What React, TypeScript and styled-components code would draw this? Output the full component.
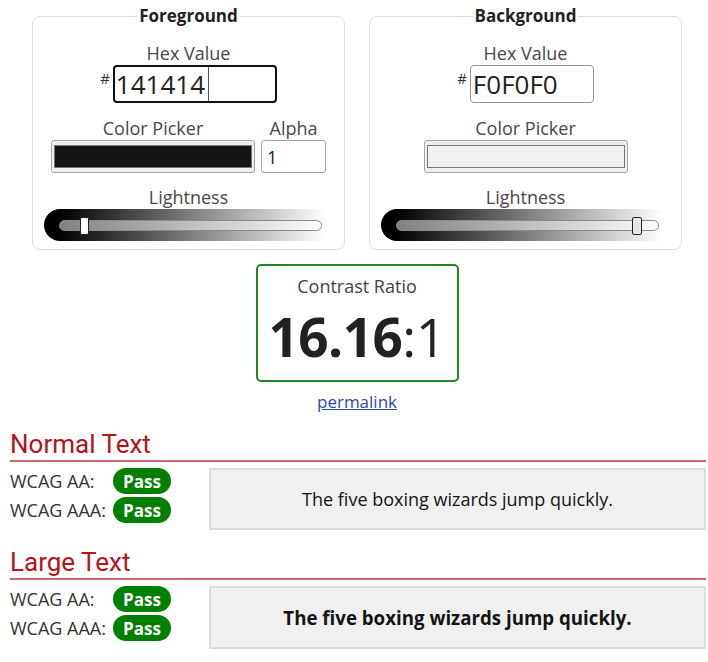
import React from 'react';
import styled, { createGlobalStyle } from 'styled-components';

const GlobalStyle = createGlobalStyle`
  html, body { margin: 0; padding: 0; background: #fff; overflow: hidden; }
  body { font-family: "Open Sans", "Noto Sans", sans-serif; color: #333; }
  * { box-sizing: border-box; }
`;

const Page = styled.div`
  width: 708px;
  padding-top: 4px;
  overflow: hidden;
`;

const TopArea = styled.div`
  width: 682px;
  padding-left: 32px;
  display: flex;
  flex-direction: column;
  align-items: center;
`;

const Panels = styled.div`
  display: flex;
  gap: 24px;
  width: 100%;
`;

const Panel = styled.fieldset`
  width: 313px;
  min-width: 0;
  margin: 0;
  padding: 0 8px 8px;
  border: 1px solid #ddd;
  border-radius: 8px;
  display: flex;
  flex-direction: column;
  align-items: center;
`;

const Legend = styled.legend`
  margin: 0 auto;
  padding: 0 2px;
  font-weight: 700;
  font-size: 17px;
  line-height: 24px;
  color: #222;
`;

const Label = styled.div<{ $mt?: number }>`
  font-size: 18px;
  line-height: 24px;
  color: #484848;
  text-align: center;
  margin-top: ${(p) => p.$mt ?? 0}px;
`;

const HexRow = styled.div`
  display: flex;
  align-items: flex-start;
  gap: 3px;
`;

const Hash = styled.span`
  font-size: 15px;
  line-height: 1;
  margin-top: 6px;
  color: #333;
`;

const HexWrap = styled.div`
  position: relative;
`;

const HexInput = styled.input<{ $focused?: boolean; $w: number }>`
  display: block;
  width: ${(p) => p.$w}px;
  height: 38px;
  font-family: inherit;
  font-size: 26px;
  color: #222;
  padding: 0 ${(p) => (p.$focused ? 1 : 2)}px;
  border: ${(p) => (p.$focused ? '2px solid #111' : '1px solid #999')};
  border-radius: 4px;
  outline: none;
  background: #fff;
`;

const Caret = styled.span`
  position: absolute;
  top: 2px;
  bottom: 2px;
  left: 95px;
  width: 1px;
  background: #555;
`;

const PickerRow = styled.div`
  display: flex;
  align-items: flex-end;
  gap: 6px;
  margin-top: 13px;
`;

const Column = styled.div`
  display: flex;
  flex-direction: column;
  align-items: center;
`;

const Swatch = styled.div`
  width: 204px;
  height: 33px;
  border: 1px solid #a4a4a4;
  border-radius: 3px;
  background: #efefef;
  padding: 4px 2px;
`;

const SwatchFill = styled.div<{ $color: string }>`
  height: 100%;
  border: 1px solid #777;
  background: ${(p) => p.$color};
`;

const AlphaInput = styled.input`
  display: block;
  width: 65px;
  height: 33px;
  border: 1px solid #a4a4a4;
  border-radius: 3px;
  font-family: inherit;
  font-size: 18px;
  color: #222;
  padding: 0 5px;
  outline: none;
`;

const Slider = styled.div`
  width: 290px;
  height: 32px;
  border-radius: 16px 0 0 16px;
  background: linear-gradient(to right, #000 0%, #000 5%, #fff 97%);
  padding: 11px 12px 0 15px;
`;

const Track = styled.div`
  position: relative;
  height: 11px;
  border: 1px solid #8a8a8a;
  border-radius: 6px;
  background: rgba(255, 255, 255, 0.5);
`;

const Thumb = styled.div<{ $fill: string; $w: number }>`
  position: absolute;
  top: -4px;
  width: ${(p) => p.$w}px;
  height: 18px;
  background: ${(p) => p.$fill};
  border: 1px solid #222;
  border-radius: 2px;
`;

const ContrastBox = styled.div`
  width: 203px;
  height: 118px;
  margin-top: 14px;
  border: 2px solid #1e8a1e;
  border-radius: 5px;
  padding-top: 9px;
  text-align: center;
`;

const RatioLabel = styled.div`
  font-size: 18px;
  line-height: 22px;
  color: #444;
`;

const RatioValue = styled.div`
  font-size: 53px;
  line-height: 60px;
  margin-top: 10px;
  color: #222;
  letter-spacing: -0.5px;
  b { font-weight: 700; }
`;

const Permalink = styled.a`
  display: block;
  margin-top: 8px;
  font-size: 17px;
  line-height: 24px;
  color: #2b4aa8;
  text-decoration: underline;
`;

const Results = styled.div`
  padding-left: 10px;
  padding-right: 2px;
`;

const Heading = styled.h2<{ $mt: number }>`
  margin: ${(p) => p.$mt}px 0 0;
  font-family: Roboto, "Open Sans", sans-serif;
  font-weight: 400;
  font-size: 26px;
  line-height: 30px;
  color: #b5121b;
  padding-bottom: 1px;
  border-bottom: 2px solid #d4646e;
`;

const ResultRow = styled.div`
  display: flex;
  margin-top: 6px;
`;

const Checks = styled.div`
  width: 199px;
  display: flex;
  flex-direction: column;
  gap: 3px;
`;

const Check = styled.div`
  display: flex;
  align-items: center;
  height: 26px;
`;

const CheckLabel = styled.span`
  width: 103px;
  font-size: 18px;
  color: #333;
`;

const Badge = styled.span`
  width: 58px;
  height: 26px;
  border-radius: 13px;
  background: #008000;
  color: #fff;
  font-weight: 700;
  font-size: 17px;
  display: flex;
  align-items: center;
  justify-content: center;
`;

const Sample = styled.div<{ $large?: boolean; $fg: string; $bg: string }>`
  flex: 1;
  height: ${(p) => (p.$large ? 63 : 62)}px;
  background: ${(p) => p.$bg};
  color: ${(p) => p.$fg};
  border: 2px solid #dcdcdc;
  display: flex;
  align-items: center;
  justify-content: center;
  font-size: ${(p) => (p.$large ? '18.7px' : '18px')};
  font-weight: ${(p) => (p.$large ? 700 : 400)};
`;

type SideProps = {
  title: string;
  hex: string;
  focused?: boolean;
  inputWidth: number;
  alpha?: boolean;
  lightness: number;
  thumbFill: string;
  thumbWidth: number;
};

const TRACK_INNER = 261;

function ColorPanel({ title, hex, focused, inputWidth, alpha, lightness, thumbFill, thumbWidth }: SideProps) {
  const left = lightness * (TRACK_INNER - thumbWidth);
  return (
    <Panel>
      <Legend>{title}</Legend>
      <Label $mt={13}>Hex Value</Label>
      <HexRow>
        <Hash>#</Hash>
        <HexWrap>
          <HexInput $focused={focused} $w={inputWidth} defaultValue={hex} readOnly />
          {focused && <Caret />}
        </HexWrap>
      </HexRow>
      <PickerRow>
        <Column>
          <Label>Color Picker</Label>
          <Swatch>
            <SwatchFill $color={`#${hex}`} />
          </Swatch>
        </Column>
        {alpha && (
          <Column>
            <Label>Alpha</Label>
            <AlphaInput defaultValue="1" readOnly />
          </Column>
        )}
      </PickerRow>
      <Label $mt={12}>Lightness</Label>
      <Slider>
        <Track>
          <Thumb $fill={thumbFill} $w={thumbWidth} style={{ left }} />
        </Track>
      </Slider>
    </Panel>
  );
}

function ResultSection({ title, large, mt }: { title: string; large?: boolean; mt: number }) {
  return (
    <>
      <Heading $mt={mt}>{title}</Heading>
      <ResultRow>
        <Checks>
          <Check>
            <CheckLabel>WCAG AA:</CheckLabel>
            <Badge>Pass</Badge>
          </Check>
          <Check>
            <CheckLabel>WCAG AAA:</CheckLabel>
            <Badge>Pass</Badge>
          </Check>
        </Checks>
        <Sample $large={large} $fg="#141414" $bg="#F0F0F0">
          The five boxing wizards jump quickly.
        </Sample>
      </ResultRow>
    </>
  );
}

export default function App() {
  return (
    <>
      <GlobalStyle />
      <Page>
        <TopArea>
          <Panels>
            <ColorPanel
              title="Foreground"
              hex="141414"
              focused
              inputWidth={164}
              alpha
              lightness={0.08}
              thumbFill="#fff"
              thumbWidth={9}
            />
            <ColorPanel
              title="Background"
              hex="F0F0F0"
              inputWidth={124}
              lightness={0.94}
              thumbFill="#e6e6e6"
              thumbWidth={10}
            />
          </Panels>
          <ContrastBox>
            <RatioLabel>Contrast Ratio</RatioLabel>
            <RatioValue>
              <b>16.16</b>:1
            </RatioValue>
          </ContrastBox>
          <Permalink href="#">permalink</Permalink>
        </TopArea>
        <Results>
          <ResultSection title="Normal Text" mt={15} />
          <ResultSection title="Large Text" mt={17} large />
        </Results>
      </Page>
    </>
  );
}
